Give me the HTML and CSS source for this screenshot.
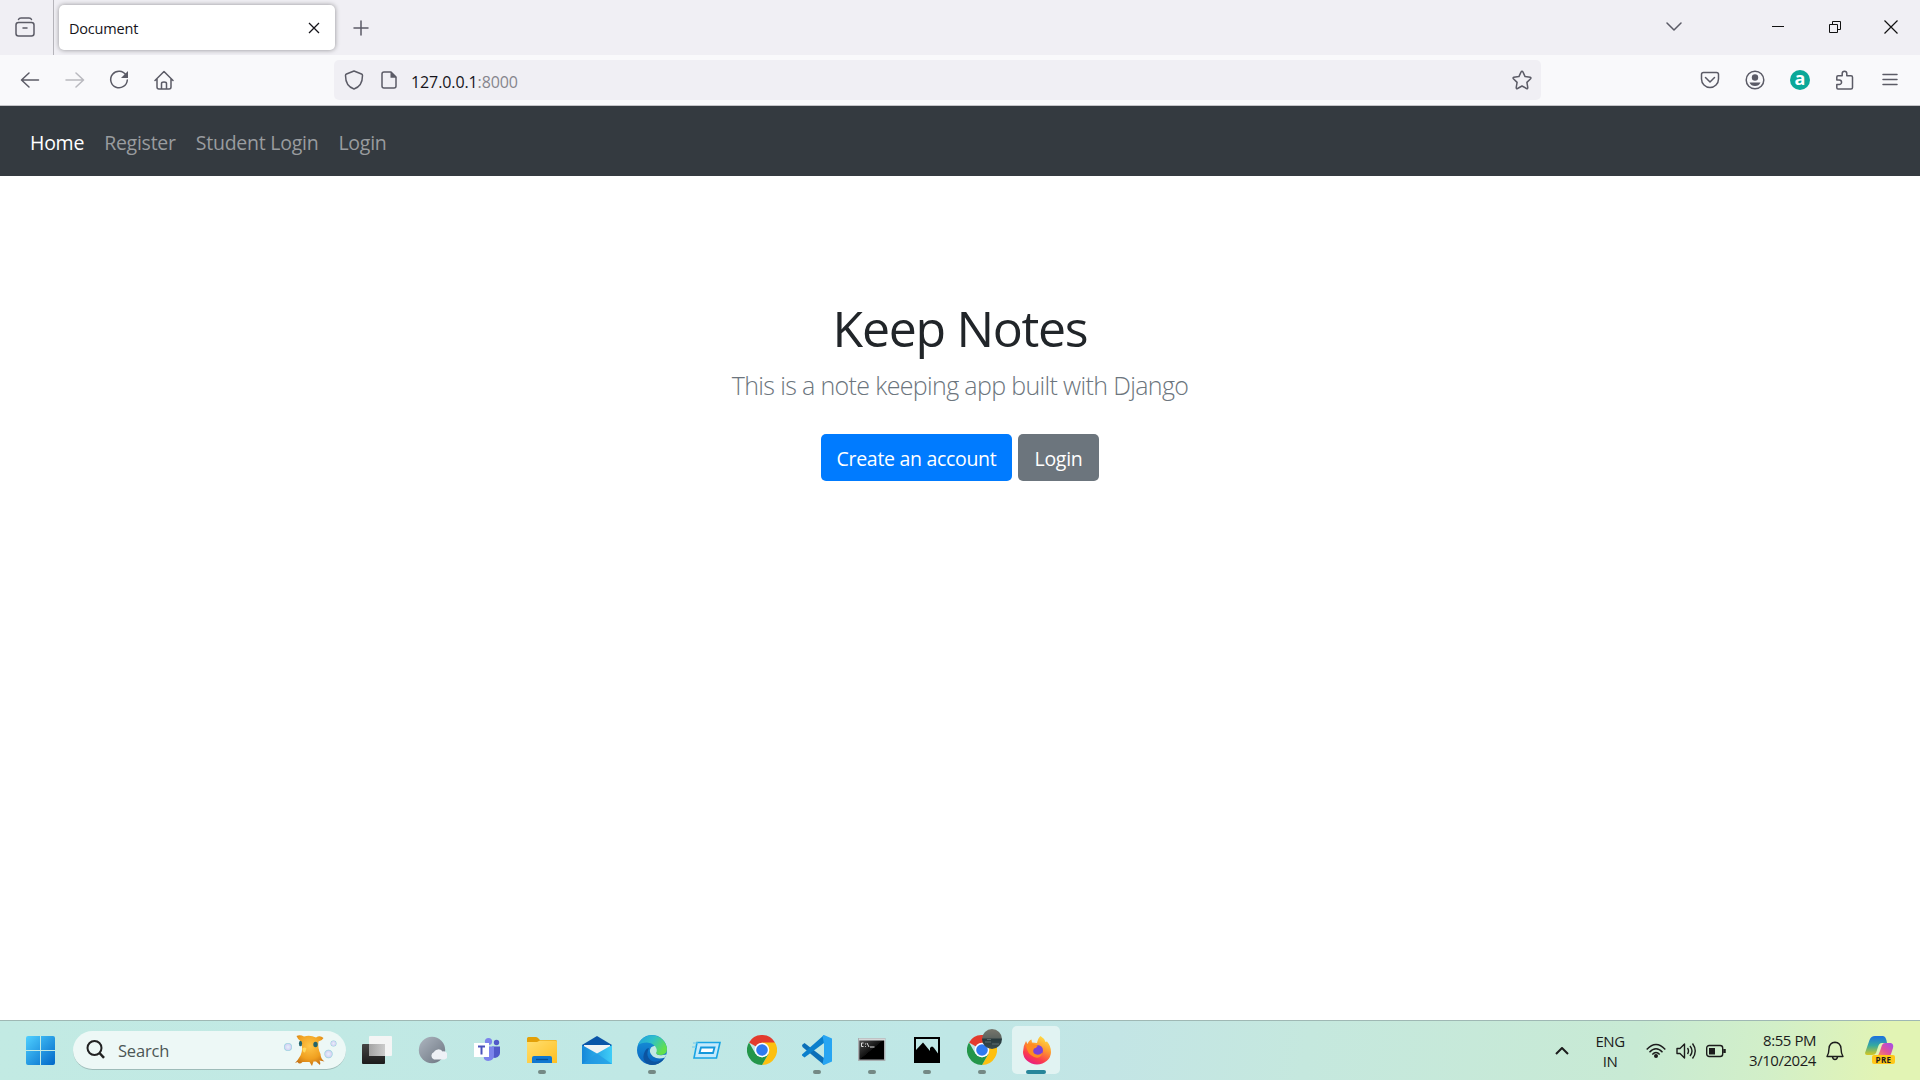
FILE: index.html
```html
<!DOCTYPE html>
<html lang="en">
<head>
<meta charset="utf-8">
<title>Document</title>
<link rel="stylesheet" href="styles.css">
</head>
<body>
<svg width="0" height="0" class="defs" aria-hidden="true">
  <defs>
    <linearGradient id="win" x1="0" y1="0" x2="1" y2="1"><stop offset="0" stop-color="#4fd0ff"/><stop offset="1" stop-color="#0067c8"/></linearGradient>
    <linearGradient id="dark" x1="0" y1="0" x2="0" y2="1"><stop offset="0" stop-color="#444"/><stop offset="1" stop-color="#1c1c1c"/></linearGradient>
    <linearGradient id="glass" x1="0" y1="0" x2="1" y2="0"><stop offset="0" stop-color="#a4a4a4"/><stop offset="1" stop-color="#ccc"/></linearGradient>
    <linearGradient id="moon" x1="0" y1="0" x2="1" y2="1"><stop offset="0" stop-color="#aeb6c0"/><stop offset="1" stop-color="#6b7480"/></linearGradient>
    <linearGradient id="folder" x1="0" y1="0" x2="1" y2="1"><stop offset="0" stop-color="#ffdf70"/><stop offset="1" stop-color="#ffbf22"/></linearGradient>
    <linearGradient id="mail" x1="0" y1="0" x2="1" y2="0"><stop offset="0" stop-color="#1587d9"/><stop offset="1" stop-color="#3fcdf7"/></linearGradient>
    <linearGradient id="edgeTop" x1="0" y1="0" x2="1" y2=".5"><stop offset="0" stop-color="#1f9fe0"/><stop offset=".5" stop-color="#2fc0c8"/><stop offset="1" stop-color="#62e04c"/></linearGradient>
    <linearGradient id="edgeLow" x1="0" y1="0" x2="0" y2="1"><stop offset="0" stop-color="#1796dc"/><stop offset="1" stop-color="#0a62bd"/></linearGradient>
    <linearGradient id="fox" x1=".8" y1="0" x2=".3" y2="1"><stop offset="0" stop-color="#ffe645"/><stop offset=".4" stop-color="#ff9a2e"/><stop offset=".75" stop-color="#fb3b4e"/><stop offset="1" stop-color="#e61b86"/></linearGradient>
    <linearGradient id="cmd" x1="0" y1="0" x2="1" y2="1"><stop offset="0" stop-color="#555"/><stop offset=".5" stop-color="#111"/><stop offset=".51" stop-color="#000"/></linearGradient>
    <linearGradient id="pilotL" x1="0" y1="0" x2="0" y2="1"><stop offset="0" stop-color="#1c6fe0"/><stop offset=".5" stop-color="#35aaa0"/><stop offset="1" stop-color="#d8c820"/></linearGradient>
    <linearGradient id="pilotR" x1="1" y1="0" x2="0" y2="1"><stop offset="0" stop-color="#a04cf0"/><stop offset=".5" stop-color="#e0529c"/><stop offset="1" stop-color="#ff9a50"/></linearGradient>
    <radialGradient id="gold" cx=".5" cy=".35" r=".7"><stop offset="0" stop-color="#ffc648"/><stop offset=".6" stop-color="#f0a020"/><stop offset="1" stop-color="#c06a10"/></radialGradient>
    <radialGradient id="bubble"><stop offset="0" stop-color="#e4f2fa"/><stop offset=".7" stop-color="#d8d4f4"/><stop offset="1" stop-color="#8fd0dc"/></radialGradient>
    <linearGradient id="photo" x1="0" y1="0" x2="0" y2="1"><stop offset="0" stop-color="#77766c"/><stop offset=".45" stop-color="#5d6460"/><stop offset=".5" stop-color="#26383c"/><stop offset="1" stop-color="#3b4c50"/></linearGradient>
    <symbol id="chrome" viewBox="0 0 30 30">
      <path d="M15 15 2 7.500A15 15 0 0 1 28 7.500z" fill="#e33b2e"/>
      <path d="M28 7.500H15L21.500 18.700 15 30A15 15 0 0 0 28 7.500z" fill="#fdc010"/>
      <path d="M2 7.500 8.500 18.700 15 22.500 21.500 18.700 15 30A15 15 0 0 1 2 7.500z" fill="#23964a"/>
      <circle cx="15" cy="15" r="7.300" fill="#fff"/><circle cx="15" cy="15" r="5.800" fill="#2f7af0"/>
    </symbol>
  </defs>
</svg>

<header class="tabs">
  <div class="view"><svg class="ico" width="22" height="22" viewBox="0 0 22 22"><rect x="2" y="6.500" width="18" height="13.500" rx="2.500"/><path d="M4.500 3.500C5 2.300 5.500 2 7 2h8c1.500 0 2 .3 2.500 1.500M9 12h4"/></svg></div>
  <div class="tab"><span>Document</span><svg width="12" height="12" viewBox="0 0 12 12"><path d="M1 1l10 10M11 1 1 11" stroke="#15141a" stroke-width="1.300"/></svg></div>
  <svg class="ico plus" width="16" height="16" viewBox="0 0 16 16"><path d="M8 1v14M1 8h14"/></svg>
  <div class="window">
    <svg class="ico" width="16" height="10" viewBox="0 0 16 10"><path d="M1 1l7 7 7-7"/></svg>
    <svg class="win" width="12" height="12" viewBox="0 0 12 12"><path d="M0 5.500h12"/></svg>
    <svg class="win" width="12" height="12" viewBox="0 0 12 12"><path d="M.5 3.500h8v8h-8zM3.500 3.500v-3h8v8h-3"/></svg>
    <svg class="win" width="14" height="14" viewBox="0 0 14 14"><path d="M.5.5l13 13M13.500.5l-13 13" stroke-width="1.200"/></svg>
  </div>
</header>

<div class="toolbar">
  <div class="history">
    <svg class="ico" width="20" height="20" viewBox="0 0 20 20"><path d="M18.500 10H2M9 3l-7.500 7L9 17"/></svg>
    <svg class="ico off" width="20" height="20" viewBox="0 0 20 20"><path d="M1 10h17M11 3l7.500 7-7.500 7"/></svg>
    <svg class="ico" width="20" height="20" viewBox="0 0 20 20"><path d="M17 5A8.300 8.300 0 1 0 18.300 10"/><path d="M19 1v7h-7z" class="solid"/></svg>
    <svg class="ico" width="20" height="20" viewBox="0 0 20 20"><path d="M1 10.500 10 1.500l9 9M3 9v8q0 2 2 2h10q2 0 2-2V9M7.500 19v-5.500q0-1.500 2.500-1.500t2.500 1.500V19"/></svg>
  </div>
  <div class="address">
    <svg class="ico" width="20" height="20" viewBox="0 0 20 20"><path d="M10 1 17.500 4q1 .4 1 1.500C18.500 12 16 17 10 19 4 17 1.500 12 1.500 5.500q0-1.100 1-1.500z"/></svg>
    <svg class="ico page" width="16" height="18" viewBox="0 0 16 18"><path d="M3 1h7l5 5v9q0 2-2 2H3q-2 0-2-2V3q0-2 2-2z"/><path d="M9.500.8v6H15.500z" class="solid"/></svg>
    <span class="url">127.0.0.1<i>:8000</i></span>
    <svg class="ico star" width="20" height="20" viewBox="0 0 20 20"><path d="M10 1.200q.6 0 .9.700l2.200 4.700 5.100.7q1.300.4.400 1.500l-3.700 3.600.9 5.200q0 1.400-1.300.9L10 16l-4.500 2.500q-1.300.5-1.300-.9l.9-5.200L1.400 8.800q-.9-1.100.4-1.500l5.100-.7 2.200-4.700q.3-.7.900-.7z"/></svg>
  </div>
  <div class="tools">
    <svg class="ico" width="20" height="20" viewBox="0 0 20 20"><path d="M3.500 2.500h13q2 0 2 2V9a8.500 8.500 0 0 1-17 0V4.500q0-2 2-2zM5.500 7.500 10 12l4.500-4.500"/></svg>
    <svg class="ico" width="20" height="20" viewBox="0 0 20 20"><circle cx="10" cy="10" r="8.800"/><circle cx="10" cy="7.500" r="3.200" class="solid"/><path d="M4.500 12.500h11q-1.500 3.500-5.500 3.500t-5.500-3.500z" class="solid"/></svg>
    <span class="badge">a</span>
    <svg class="ico" width="20" height="20" viewBox="0 0 20 20"><path d="M3 19q-1.200 0-1.200-1.200V14.500h2.500a2.200 2.200 0 0 0 0-4.500H1.800V7q0-1.200 1.200-1.200h4.200V3.500a2.300 2.300 0 0 1 4.600 0v2.300H16q1.500 0 1.500 1.500v10.200q0 1.500-1.500 1.500z"/></svg>
    <svg class="ico menu" width="16" height="16" viewBox="0 0 16 16"><path d="M1 2.500h14M1 7.500h14M1 12.500h14"/></svg>
  </div>
</div>

<nav class="navbar"><a class="active">Home</a><a>Register</a><a>Student Login</a><a>Login</a></nav>

<main>
  <h1>Keep Notes</h1>
  <p>This is a note keeping app built with Django</p>
  <div class="actions"><a class="btn primary">Create an account</a><a class="btn secondary">Login</a></div>
</main>

<footer class="taskbar">
  <svg class="start" width="29" height="29" viewBox="0 0 29 29"><path d="M2 0H14V14H0V2Q0 0 2 0zM15 0H27Q29 0 29 2V14H15zM0 15H14V29H2Q0 29 0 27zM15 15H29V27Q29 29 27 29H15z" fill="url(#win)"/></svg>
  <div class="search">
    <svg width="20" height="20" viewBox="0 0 20 20"><circle cx="8.500" cy="8" r="7" fill="none" stroke="#222" stroke-width="2"/><path d="M13.500 13l4.500 4.800" stroke="#222" stroke-width="2.500"/></svg>
    <span>Search</span>
    <svg width="54" height="34" viewBox="0 0 54 34">
      <circle cx="5" cy="14" r="4" fill="url(#bubble)"/><circle cx="50.500" cy="10.500" r="3" fill="url(#bubble)"/>
      <path d="M13.500 3Q17 1.500 21 3.500 27 1.500 33 4.500 37 2 40.500 5 39 8 35.500 8.500 34.500 15 37.500 21 37.500 25.500 41.500 28.500L36.500 27.500Q38 30.500 37 32L33 28.500H30.500L29 33 26.500 29H19.500Q16.500 32 14.500 29L12 30Q15 27 17.500 22.500 20.500 16 18 8.500 15 7 13.500 3z" fill="url(#gold)"/>
      <ellipse cx="17.500" cy="10.500" rx="1.600" ry="2.700" fill="#23646c"/><ellipse cx="32.500" cy="11.500" rx="2.200" ry="2.800" fill="#23646c"/><path d="M19.500 15.500q2-2 4 0l-1.500 4q-2.500 0-2.500-4z" fill="#ffd95e"/>
      <circle cx="45.500" cy="21" r="4.200" fill="url(#bubble)"/>
    </svg>
  </div>
  <div class="apps">
    <div class="app"><svg width="30" height="30" viewBox="0 0 30 30"><rect y="9" width="23" height="20" rx="1" fill="url(#dark)"/><rect x="7" y="1" width="23" height="20" rx="1" fill="#f4f5f5"/><path d="M7 9H23V21H7z" fill="url(#glass)"/></svg></div>
    <div class="app"><svg width="30" height="30" viewBox="0 0 30 30"><circle cx="15" cy="15" r="13.200" fill="url(#moon)"/><path d="M17 24.500a4 4 0 0 1 0-7.500 5 5 0 0 1 8.500-.5 4 4 0 0 1 2 8z" fill="#eef1f6"/></svg></div>
    <div class="app"><svg width="30" height="30" viewBox="0 0 30 30"><circle cx="16.500" cy="6.500" r="3.600" fill="#7b83eb"/><circle cx="24.500" cy="7.500" r="2.700" fill="#5059c9"/><path d="M20 11.500h8V18a5 5 0 0 1-7 4.500z" fill="#5059c9"/><path d="M11 11.500h11V20a5.700 5.700 0 0 1-10 4z" fill="#7b83eb"/><rect x="2" y="8" width="15" height="14" fill="#fff"/><path d="M6 11.500h7M9.500 11.500v8" stroke="#4b53bc" stroke-width="2"/></svg></div>
    <div class="app open"><svg width="30" height="30" viewBox="0 0 30 30"><path d="M0 3.500Q0 2 1.500 2H9q1.500 0 2.500 1.500L13 5H28.500Q30 5 30 6.500V12H0z" fill="#e3a008"/><path d="M0 7H10L13 5.500H28.500Q30 5.500 30 7V28H0z" fill="url(#folder)"/><path d="M5 28V23q0-2 2-2H23q2 0 2 2v5z" fill="#1077d0"/><path d="M9 24.500H21" stroke="#064f96" stroke-width="1.300"/></svg></div>
    <div class="app"><svg width="30" height="30" viewBox="0 0 30 30"><path d="M0 10 15 1 30 10V16H0z" fill="#0a55a8"/><path d="M2 10H28V18L15 24 2 18z" fill="#f0f3f5"/><path d="M0 10 15 18.500 30 10V29H0z" fill="url(#mail)"/><path d="M15 18.500 30 29H0z" fill="#2298e2" opacity=".7"/></svg></div>
    <div class="app open"><svg width="30" height="30" viewBox="0 0 30 30"><circle cx="15" cy="15" r="15" fill="url(#edgeLow)"/><path d="M1 10A15 15 0 0 1 30 14Q30 20 23 20 18 20 19 16 19 8 10 7.500 4 7.500 1 10z" fill="url(#edgeTop)"/><path d="M12 13Q8 21 14 25.500 20 29 28 22.500A15 15 0 0 1 13 29.800Q3 26 8 16 9.500 13 12 13z" fill="#0c54a0"/><path d="M18 11Q21 15 19 18 20 21 26 20L29.500 19.500 28 22.500Q21 25 16 21.500 11 17 14 12.500 16 10.500 18 11z" fill="#c2e8e4"/></svg></div>
    <div class="app"><svg width="30" height="30" viewBox="0 0 30 30"><path d="M5 7.500H28L24.500 23H2z" fill="#c4eafc" stroke="#18a4e4" stroke-width="1.600"/><path d="M9 12.500H22.500L21 18H7.500z" fill="#fff" stroke="#1498dc" stroke-width="1.800"/><path d="M1 8h5M0 12h4" stroke="#6cc8ee"/></svg></div>
    <div class="app"><svg width="30" height="30"><use href="#chrome"/></svg></div>
    <div class="app open"><svg width="30" height="30" viewBox="0 0 30 30"><path d="M0 10 2.500 8 22 23V30L0.500 12z" fill="#0b6fb8"/><path d="M0 19.500 22 0V8L2.500 22.500 0 20.500z" fill="#0a7fcc"/><path d="M22 0 30 3.500V26.500L22 30 20.500 29 22 21V9L20.500 1z" fill="#27a5f2"/></svg></div>
    <div class="app open"><svg width="30" height="30" viewBox="0 0 30 30"><rect x="1.700" y="3.700" width="26" height="21.500" fill="url(#cmd)" stroke="#a9adb0" stroke-width="1.400"/><path d="M2 4.500H28" stroke="#d5d7d8" stroke-width="2"/><path d="M6.500 8H4.500v3.500h2M8.500 8.500v1M8.500 11v.8M10 8l2 4M13 12h4.500" stroke="#ddd" fill="none"/></svg></div>
    <div class="app open"><svg width="30" height="30" viewBox="0 0 30 30"><path d="M2 2H28V28H2zM4 4V15L11 7.500 18 16V13q2-3 4 0l4 5.500V4z" fill="#000" fill-rule="evenodd"/></svg></div>
    <div class="app open"><svg width="30" height="30"><use href="#chrome"/></svg><svg class="avatar" width="20" height="20" viewBox="0 0 20 20"><circle cx="10" cy="10" r="10" fill="url(#photo)"/><path d="M3 13h6M10 15h7M5 10.500h4" stroke="#7c8c8c" opacity=".6"/></svg></div>
    <div class="app open current"><svg width="30" height="30" viewBox="0 0 30 30"><path d="M18.500 1Q22 3 23.500 7L25 6.500Q29 11 29 17A14 12.500 0 0 1 1 17Q1 11 4 6L5.500 9Q7 5 9.500 4.500L10 7.500 15 8Q16 3 18.500 1z" fill="url(#fox)"/><circle cx="15.500" cy="15.500" r="5.500" fill="#7a41d8"/><path d="M4 10Q9 7.500 12 9.500L16 10.500Q14.500 13 12 13.500 10 17 13 19 17 21 20.500 17.500 19 24.500 12 22 5 19 4 10z" fill="#ff8b22"/></svg></div>
  </div>
  <div class="tray">
    <svg class="line" width="14" height="8" viewBox="0 0 14 8"><path d="M1 7l6-6 6 6" stroke-width="2"/></svg>
    <div class="lang">ENG<br>IN</div>
    <div class="status">
      <svg class="line" width="20" height="16" viewBox="0 0 20 16"><path d="M.7 6.500Q10-3.500 19.300 6.500M3.500 9.200Q10 2.200 16.500 9.200M6.300 11.500Q10 7.500 13.700 11.500"/><circle cx="10" cy="13" r="2" fill="#1c1c1c" stroke="none"/></svg>
      <svg class="line" width="20" height="18" viewBox="0 0 20 18"><path d="M1 6.500h3L8.500 2v14L4 11.500H1zM11.500 6q2 3 0 6M14 4q4 5 0 10M16.500 1.500q5.500 7.500 0 15"/></svg>
      <svg class="line" width="20" height="14" viewBox="0 0 20 14"><rect x=".7" y="1.500" width="16" height="11" rx="2.500"/><path d="M3 4H9V10.500H3z" fill="#1c1c1c" stroke="none"/><path d="M18.500 5v4" stroke-width="2.500"/></svg>
    </div>
    <div class="clock">8:55 PM<br>3/10/2024</div>
    <svg class="line bell" width="18" height="20" viewBox="0 0 18 20"><path d="M1 15.500Q3 12 3 7.500 3.500 1.500 9 1.200 14.500 1.500 15 7.500 15 12 17 15.500zM6.500 16Q7 18.500 9 18.500T11.500 16"/></svg>
    <div class="copilot"><svg width="30" height="24" viewBox="0 0 30 24"><path d="M0 17 4.500 4Q6 0 10 0H18Q21 0 22 7H17Q14 7 13 11L11 17Q10 19 7 19H2Q0 19 0 17z" fill="url(#pilotL)"/><path d="M17 9Q18 7 20 7H26Q29 8 28 12L26 18Q25 21 22 21H11Q14 19 15 15z" fill="url(#pilotR)"/></svg><b>PRE</b></div>
  </div>
</footer>
</body>
</html>
```
FILE: styles.css
```css
* { box-sizing: border-box; }
body {
  margin: 0;
  width: 1920px;
  height: 1080px;
  overflow: hidden;
  display: flex;
  flex-direction: column;
  background: #fff;
  color: #212529;
  font-family: "Open Sans", "Noto Sans", sans-serif;
}
svg { display: block; flex: none; }
.defs { position: absolute; }
.ico { fill: none; stroke: #5b5b66; stroke-width: 1.5; stroke-linecap: round; stroke-linejoin: round; }
.solid { fill: #5b5b66; stroke: none; }
.off { opacity: .4; }

.tabs { height: 55px; background: #f0eff4; display: flex; align-items: center; }
.view { width: 54px; height: 55px; padding: 16px 0 0 14px; border-right: 1px solid #b5b4ba; }
.tab {
  width: 276px; height: 45px; margin-left: 5px; padding: 0 15px 0 10px;
  display: flex; align-items: center; justify-content: space-between;
  border-radius: 5px; background: #fff; box-shadow: 0 0 5px rgba(0,0,0,.4);
  color: #15141a; font-size: 14.500px; letter-spacing: -.2px;
}
.tab span { padding-top: 2px; }
.plus { margin-left: 18px; }
.window { margin-left: auto; padding: 0 22px 1px 0; display: flex; align-items: center; }
.window .ico { margin-right: 90px; }
.win { fill: none; stroke: #111; stroke-width: 1; margin-right: 45px; }
.window .win:nth-child(3) { margin-right: 43px; }
.window .win:last-child { margin-right: 0; }

.toolbar { height: 51px; background: #f9f9fb; border-bottom: 1px solid #c4c4c8; display: flex; align-items: center; }
.history { width: 334px; padding-left: 20px; display: flex; gap: 24.700px; }
.address { width: 1207px; height: 40px; padding: 0 9px 0 10px; display: flex; align-items: center; border-radius: 5px; background: #f0eff4; }
.page { margin-left: 17px; }
.url { margin-left: 14px; padding-top: 3px; color: #15141a; font-size: 16px; letter-spacing: -.1px; }
.url i { color: #86858d; font-style: normal; }
.star { margin-left: auto; }
.tools { margin-left: auto; padding-right: 22px; display: flex; align-items: center; gap: 25px; }
.menu { margin-left: 2px; }
.badge { width: 20px; height: 20px; border-radius: 50%; background: #0aa899; color: #fff; font-size: 18px; font-weight: 700; line-height: 17px; text-align: center; }

.navbar { height: 70px; padding: 3px 30px 0; display: flex; align-items: center; gap: 20px; background: #343a40; color: #999c9f; font-size: 19.500px; letter-spacing: -.25px; }
.active { color: #fff; }

main { flex: 1; padding-top: 117px; display: flex; flex-direction: column; align-items: center; }
h1 { margin: 0; font-size: 50px; font-weight: 400; line-height: 70px; letter-spacing: -1.300px; }
p { margin: 3px 0 0; color: #6c757d; font-size: 25px; font-weight: 300; line-height: 38px; letter-spacing: -.650px; }
.actions { margin-top: 30px; display: flex; gap: 6px; }
.btn { height: 47px; padding-top: 1px; display: flex; align-items: center; justify-content: center; border-radius: 5px; color: #fff; font-size: 19.500px; letter-spacing: -.3px; }
.primary { width: 191px; background: #007bff; }
.secondary { width: 81px; background: #6c757d; }

.taskbar { height: 60px; display: flex; align-items: center; border-top: 1px solid #9fb8b4; background: linear-gradient(100deg, #c2eae3 0%, #bfe7e6 50%, #c3e5e5 58%, #c5e8de 68%, #c8ead4 85%, #d2efc8 92%, #e2f4b4 98%); color: #1c1c1c; }
.start { margin-left: 26px; }
.search { width: 273px; height: 39px; margin-left: 18px; padding: 0 9px 0 13px; display: flex; align-items: center; border-radius: 20px; border-bottom: 1px solid #9ebcb9; background: #edf8f6; }
.search span { margin-left: 12px; margin-right: auto; color: #4c5655; font-size: 16.500px; letter-spacing: -.2px; }
.apps { margin-left: 3px; display: flex; }
.app { position: relative; width: 55px; height: 49px; padding-bottom: 2px; display: flex; align-items: center; justify-content: center; }
.open::after { content: ""; position: absolute; left: 23.500px; bottom: 1px; width: 8px; height: 4px; border-radius: 2px; background: #748985; }
.current::before { content: ""; position: absolute; left: 3px; top: 0; width: 48px; height: 48px; border-radius: 5px; background: #e1f3f2; z-index: -1; }
.current { z-index: 0; }
.current::after { left: 17px; width: 20px; background: #27869a; }
.avatar { position: absolute; left: 28px; top: 3px; }
.tray { margin-left: auto; padding-right: 24px; display: flex; align-items: center; font-size: 15px; line-height: 20px; letter-spacing: -.450px; }
.line { fill: none; stroke: #1c1c1c; stroke-width: 1.400; stroke-linejoin: round; }
.lang { width: 32px; margin-left: 25px; text-align: center; }
.status { margin-left: 20px; display: flex; align-items: center; gap: 10px; }
.clock { width: 80px; margin-left: 10px; padding-bottom: 2px; text-align: right; }
.bell { margin-left: 10px; }
.copilot { width: 31px; height: 30px; margin-left: 21px; position: relative; }
.copilot b { position: absolute; left: 7px; top: 19px; width: 23px; height: 9px; border-radius: 2px; background: #ffc818; font-size: 8px; line-height: 9px; text-align: center; letter-spacing: .4px; }
```
